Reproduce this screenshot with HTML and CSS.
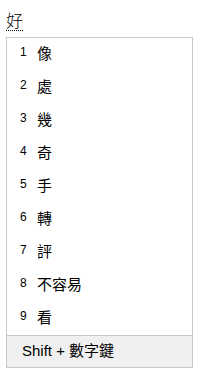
FILE: index.html
```html
<!DOCTYPE html>
<html lang="zh-Hant">
<head>
  <meta charset="UTF-8">
  <title>IME</title>
  <link rel="stylesheet" href="styles.css">
</head>
<body>

  <!-- composition text -->
  <div class="composing"><span class="comp-text">好</span></div>

  <!-- candidate window -->
  <div class="candidates">
    <ul class="cand-list">
      <li class="cand"><span class="num">1</span><span class="word">像</span></li>
      <li class="cand"><span class="num">2</span><span class="word">處</span></li>
      <li class="cand"><span class="num">3</span><span class="word">幾</span></li>
      <li class="cand"><span class="num">4</span><span class="word">奇</span></li>
      <li class="cand"><span class="num">5</span><span class="word">手</span></li>
      <li class="cand"><span class="num">6</span><span class="word">轉</span></li>
      <li class="cand"><span class="num">7</span><span class="word">評</span></li>
      <li class="cand"><span class="num">8</span><span class="word">不容易</span></li>
      <li class="cand"><span class="num">9</span><span class="word">看</span></li>
    </ul>
    <div class="hint">Shift + 數字鍵</div>
  </div>

</body>
</html>
```

FILE: styles.css
```css
body {
  margin: 0;
  background: #fff;
  font-family: "Noto Sans CJK TC", "Liberation Sans", sans-serif;
  color: #000;
}
.composing {
  padding: 8px 0 0 6px;
  height: 37px;
  box-sizing: border-box;
}
.comp-text {
  font-size: 17px;
  line-height: 21px;
  font-weight: 300;
  border-bottom: 1px dotted #000;
  display: inline-block;
}
.candidates {
  margin-left: 6px;
  width: 187px;
  border: 1px solid #c8c8c8;
  box-sizing: border-box;
}
.cand-list {
  list-style: none;
  margin: 0;
  padding: 0;
}
.cand {
  display: flex;
  align-items: center;
  height: 33px;
  padding: 0 0 5px 13px;
  box-sizing: border-box;
}
.num {
  width: 17px;
  font-family: "Liberation Sans", sans-serif;
  font-size: 12px;
}
.word {
  font-size: 15px;
}
.hint {
  border-top: 1px solid #c8c8c8;
  background: #f0f0f0;
  height: 31px;
  line-height: 30px;
  padding-left: 15px;
  font-family: "Liberation Sans", "Noto Sans CJK TC", sans-serif;
  font-size: 15px;
}
```
